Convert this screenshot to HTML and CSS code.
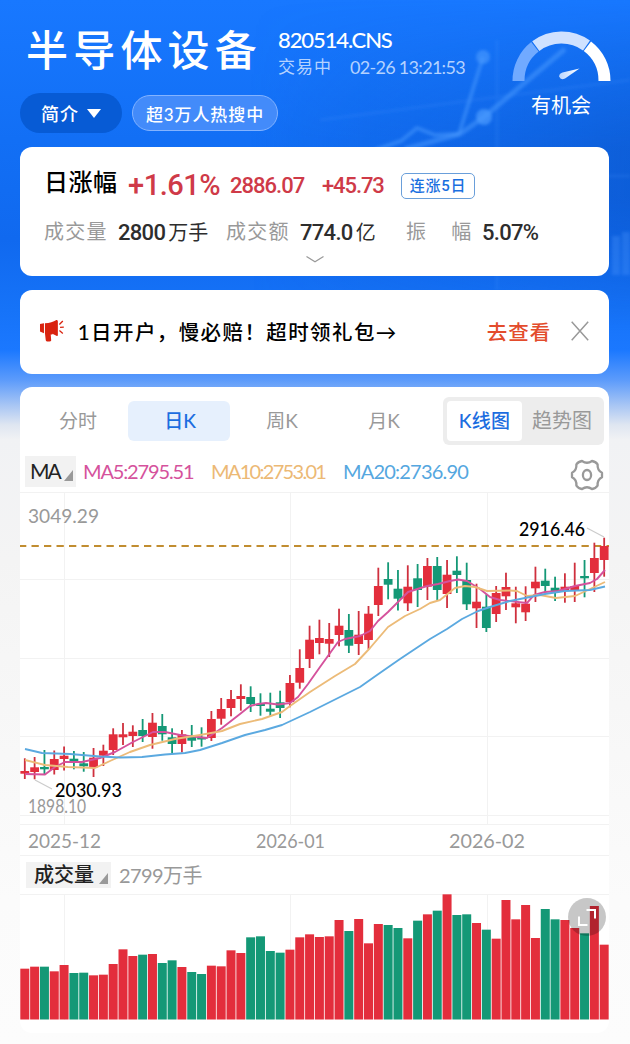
FILE: index.html
```
<!DOCTYPE html>
<html lang="zh-CN">
<head>
<meta charset="utf-8">
<title>半导体设备</title>
<link rel="stylesheet" href="styles.css">
</head>
<body>
<div class="page">
  <svg class="backdrop" viewBox="0 0 630 440" aria-hidden="true">
    <defs>
      <linearGradient id="shade" x1="0" y1="0" x2="1" y2="0">
        <stop offset="0" stop-color="#0b57d0" stop-opacity="0"/>
        <stop offset="1" stop-color="#0b55c8" stop-opacity=".6"/>
      </linearGradient>
      <linearGradient id="shadeFade" x1="0" y1="0" x2="0" y2="1">
        <stop offset="0" stop-color="#000"/>
        <stop offset=".45" stop-color="#fff"/>
        <stop offset=".6" stop-color="#fff"/>
        <stop offset="1" stop-color="#000"/>
      </linearGradient>
      <mask id="shadeMask"><rect width="630" height="330" fill="url(#shadeFade)"/></mask>
      <filter id="soft"><feGaussianBlur stdDeviation="1.6"/></filter>
    </defs>
    <rect x="250" width="380" height="330" fill="url(#shade)" mask="url(#shadeMask)"/>
    <g filter="url(#soft)" fill="none" stroke="#4b9bff" stroke-opacity=".5">
      <path stroke-width="4" d="M459 134L483 57"/>
      <path stroke-width="4" d="M375 150L401 141L417 128L435 135L459 134"/>
      <path stroke-width="5" d="M405 149L460 134L484 117L565 49"/>
      <circle cx="483" cy="57" r="7" fill="#4b9bff" fill-opacity=".6" stroke="none"/>
      <circle cx="484" cy="117" r="8" fill="#4b9bff" fill-opacity=".7" stroke="none"/>
      <path stroke-width="3" stroke-opacity=".15" d="M497 40V290M320 120L630 80M600 176H630"/>
      <path stroke-width="8" stroke-opacity=".3" d="M616 236V275M626 232V275"/>
    </g>
  </svg>

  <header class="header">
    <div class="title-row">
      <h1 class="title">半导体设备</h1>
      <div class="meta">
        <div class="code">820514.CNS</div>
        <div class="status"><span class="state">交易中</span><span class="time">02-26 13:21:53</span></div>
      </div>
      <div class="gauge">
        <svg width="100" height="52" viewBox="0 0 100 52">
          <defs><linearGradient id="needle"><stop offset="0" stop-color="#b9d5ff"/><stop offset="1" stop-color="#fff"/></linearGradient></defs>
          <g fill="none" stroke-width="12">
            <path stroke="#71aaff" d="M7.5 51A43 43 0 0 1 23.9 16.8"/>
            <path stroke="#cfe1ff" d="M24.8 16.1A43 43 0 0 1 75.5 15.5"/>
            <path stroke="#fff" d="M76.4 16.2A43 43 0 0 1 93.5 51"/>
          </g>
          <path fill="url(#needle)" d="M68.5 38.5L54 48.5Q49.5 50.5 48.2 46.5Q48 43.5 51.5 42.5Z"/>
        </svg>
        <div class="gauge-label">有机会</div>
      </div>
    </div>
    <div class="chips">
      <span class="chip chip-dark">简介<i class="caret"></i></span>
      <span class="chip chip-light">超3万人热搜中</span>
    </div>
  </header>

  <section class="card quote">
    <div class="quote-main">
      <span class="quote-name">日涨幅</span>
      <span class="change">+1.61%</span>
      <span class="price">2886.07</span>
      <span class="delta">+45.73</span>
      <span class="streak">连涨5日</span>
    </div>
    <div class="quote-sub">
      <span class="label l1">成交量</span><span class="value v1">2800<b>万手</b></span>
      <span class="label l2">成交额</span><span class="value v2">774.0<b>亿</b></span>
      <span class="label l3"><i>振</i><i>幅</i></span><span class="value">5.07%</span>
    </div>
    <svg class="more" width="18" height="7" viewBox="0 0 18 7"><path d="M.5 .5L9 5.8L17.5 .5" fill="none" stroke="#999" stroke-width="1.2"/></svg>
  </section>

  <section class="card notice">
    <svg width="26" height="24" viewBox="0 0 26 24">
      <path fill="#d9230f" d="M1 5L5 4.3V14.2L1 12.6ZM6 4.2Q13 4 17.5 1Q19 .5 19 2.5V16Q19 17.5 17.5 16.7L13.5 14.8V15.6H11.8L12.3 21.6Q12 22.5 10.5 22.5H8Q7 22.3 6.8 21.3L6 14.2Z"/>
      <path stroke="#d9230f" stroke-width="1.3" d="M20.5 5.5L24 2M21.2 8.3L25 8M20.6 11.5L24 14.5" fill="none"/>
    </svg>
    <span class="notice-text">1日开户，慢必赔！超时领礼包→</span>
    <span class="notice-link">去查看</span>
    <svg class="close" width="18" height="20" viewBox="0 0 18 20"><path d="M.7 .7L17.3 19.3M17.3 .7L.7 19.3" stroke="#999" stroke-width="1.5"/></svg>
  </section>

  <section class="card market">
    <nav class="tabs">
      <span class="tab">分时</span><span class="tab active">日K</span><span class="tab">周K</span><span class="tab">月K</span>
      <div class="switch"><span class="on">K线图</span><span class="off">趋势图</span></div>
    </nav>
    <div class="indicators">
      <span class="picker ma-picker">MA<i class="corner"></i></span>
      <span class="ma ma5">MA5:2795.51</span><span class="ma ma10">MA10:2753.01</span><span class="ma ma20">MA20:2736.90</span>
      <svg class="gear" width="34" height="32" viewBox="0 0 34 32" fill="none" stroke="#999" stroke-width="2.3" stroke-linejoin="round">
        <path d="M12 2Q17 5.6 22 2Q25.5 2.4 27.6 5.4Q27.2 11.6 32 13.8V18.2Q27.2 20.4 27.6 26.6Q25.5 29.6 22 30Q17 26.4 12 30Q8.500 29.6 6.400 26.6Q6.800 20.4 2 18.2V13.8Q6.800 11.6 6.400 5.400Q8.500 2.400 12 2Z"/>
        <ellipse cx="17" cy="16" rx="4.1" ry="5"/>
      </svg>
    </div>
    <svg class="kline" id="kline" width="589" height="364" viewBox="20 492 589 364">
      <path class="grid" d="M20 492.5H609M20 579.5H609M20 658.5H609M20 736.5H609M20 815.5H609M20 824.5H609M20 855.5H609M64.5 492V825M290.5 492V825M487.5 492V825"/>
      <path class="last" d="M19 546H609"/>
      <g id="candles"></g>
      <path class="line5" d="M25 774L45 774.5L55 767L65 762L82 762L100 758L115 752L133 742L153 732L165 732L180 735L207 738L222 728L240 714L250 706L258 704L266 703L278 704.5L290 703L298 697L308 684L320 667L338 642L345 639L360 636L370 631L378 621L388 612L408 592L427 586L438 584L450 581L458 579.5L467 581L480 589L490 597L500 600L527 603L534 595L545 592L558 591L575 586L590 583L597 579L605 570"/>
      <path class="line10" d="M25 760L45 765L68 767L95 768L110 761L130 752L150 745L175 739L200 735L222 731L240 724L262 719L282 712L290 706L310 692L335 676L355 664L370 648L388 627L405 616L420 609L430 603L440 600L455 588L465 586L475 587L487 591L510 590.5L517 591L527 596L540 595L556 598L575 596L590 589L605 582"/>
      <path class="line20" d="M25 749L42 753L70 754L100 756.5L120 757.5L142 757L165 754.5L185 753L200 750L222 743L245 735L265 730L282 725L310 712L342 696L360 687L377 675L400 659L415 649L430 639L447 629L462 619L478 611L490 607L510 601L545 594L565 591L590 590L605 586.5"/>
      <path class="leader" d="M587 528L604 537M35 780L52 789"/>
      <g class="axis">
        <text x="28" y="523" textLength="71" lengthAdjust="spacingAndGlyphs">3049.29</text>
        <text x="28" y="813" textLength="58" lengthAdjust="spacingAndGlyphs">1898.10</text>
        <text x="28" y="848" textLength="73" lengthAdjust="spacingAndGlyphs">2025-12</text>
        <text x="256" y="848" textLength="69" lengthAdjust="spacingAndGlyphs">2026-01</text>
        <text x="449" y="848" textLength="76" lengthAdjust="spacingAndGlyphs">2026-02</text>
      </g>
      <g class="mark">
        <text x="519" y="536" textLength="66" lengthAdjust="spacingAndGlyphs">2916.46</text>
        <text x="55" y="797" textLength="67" lengthAdjust="spacingAndGlyphs">2030.93</text>
      </g>
    </svg>
    <div class="volume-head">
      <span class="picker vol-picker">成交量<i class="corner"></i></span><span class="vol-value">2799万手</span>
    </div>
    <div class="volume">
      <svg width="589" height="126" viewBox="20 894 589 126">
        <path class="grid" d="M20 894.5H609M64.5 895V1020M290.5 895V1020M487.5 895V1020"/>
        <g id="bars"></g>
      </svg>
      <span class="expand"><svg width="38" height="38" viewBox="0 0 38 38" fill="none" stroke="#fff" stroke-width="2"><path d="M18.5 12H27V20.5M11 18.5V27H19.5"/></svg></span>
    </div>
  </section>
</div>
<script src="chart.js"></script>
</body>
</html>
```
FILE: styles.css
```
* { box-sizing: border-box; }
body {
  margin: 0;
  font-family: Lato, "Noto Sans CJK SC", sans-serif;
  color: #111;
}
i, b { font-style: normal; font-weight: inherit; }
.page {
  position: relative;
  width: 630px;
  height: 1044px;
  overflow: hidden;
  padding: 0 21px 0 20px;
  background: linear-gradient(#1878ff 0, #126ff5 140px, #1069ef 240px, #1673f8 310px, #1b78ff 350px, #5c9bfb 380px, #a7c5f4 405px, #dfe6f1 425px, #f1f2f4 440px, #f4f4f4 560px, #fbfbfb 900px, #fcfcfc 1044px);
}
.backdrop { position: absolute; left: 0; top: 0; width: 630px; height: 440px; }
.header { position: relative; height: 147px; color: #fff; }
.title-row { display: flex; height: 93px; }
.title {
  flex: none;
  margin: 18px 0 0 6px;
  width: 252px;
  font-size: 42px;
  line-height: 64px;
  font-weight: 500;
  letter-spacing: 5.2px;
  white-space: nowrap;
}
.meta { flex: none; padding-top: 26px; width: 233px; white-space: nowrap; }
.code { font-size: 22px; line-height: 28px; font-weight: 500; letter-spacing: -1.1px; }
.status { display: flex; gap: 18px; font-size: 18px; line-height: 26px; color: #b4d2ff; }
.state { font-size: 17px; letter-spacing: 1px; }
.time { letter-spacing: -.7px; }
.gauge { flex: none; padding-top: 30px; width: 100px; text-align: center; }
.gauge svg { display: block; }
.gauge-label { margin-top: 8px; font-size: 20px; line-height: 30px; white-space: nowrap; }
.chips { display: flex; align-items: center; gap: 10px; height: 40px; }
.chip { display: flex; align-items: center; justify-content: center; white-space: nowrap; font-weight: 500; }
.chip-dark { width: 102px; height: 40px; border-radius: 20px; background: #075bd5; font-size: 18px; letter-spacing: 1px; gap: 8px; }
.caret { border: 7px solid transparent; border-top: 9px solid #fff; border-bottom: 0; }
.chip-light { width: 146px; height: 36px; border-radius: 18px; border: 1px solid #83b3ff; background: #438bfa; font-size: 17px; letter-spacing: .9px; }
.card { position: relative; background: #fff; border-radius: 12px; }
.quote { height: 129px; padding: 17px 0 0 24px; }
.quote-main { display: flex; align-items: center; height: 41px; font-family: Roboto, "Noto Sans CJK SC", sans-serif; color: #cf3a48; white-space: nowrap; }
.quote-name { width: 84px; font-size: 24px; font-weight: 500; line-height: 34px; margin-top: -4px; color: #000; letter-spacing: .5px; }
.change { width: 102px; font-size: 29px; font-weight: 500; letter-spacing: -.45px; }
.price { width: 92px; font-size: 22px; font-weight: 500; letter-spacing: -1px; padding-top: 1px; }
.delta { width: 79px; font-size: 22px; font-weight: 500; letter-spacing: -1.1px; padding-top: 1px; }
.streak { width: 74px; height: 26px; margin-top: 3px; border: 1px solid #6a9fda; border-radius: 5px; color: #1b6fe0; font-size: 15px; font-weight: 500; line-height: 24px; letter-spacing: .8px; text-align: center; }
.quote-sub { display: flex; align-items: center; height: 40px; margin-top: 8px; font-family: Roboto, "Noto Sans CJK SC", sans-serif; font-size: 22px; line-height: 30px; color: #2d2d2d; white-space: nowrap; }
.label { color: #999; font-size: 20px; letter-spacing: 1.2px; margin-top: -2px; }
.l1 { width: 74px; }
.l2 { width: 74px; }
.l3 { display: flex; gap: 24px; width: 76px; }
.value { font-weight: 500; letter-spacing: -.7px; }
.value b { font-weight: 400; font-size: 20px; letter-spacing: 0; margin-left: 3px; }
.v1 { width: 108px; }
.v2 { width: 106px; }
.more { position: absolute; left: 286px; top: 109px; }
.notice { display: flex; align-items: center; height: 84px; margin-top: 14px; padding: 0 20px 2px 19px; white-space: nowrap; }
.notice-text { width: 427px; padding-left: 13px; font-size: 20.5px; font-weight: 500; color: #000; letter-spacing: 1.4px; }
.notice-link { width: 85px; font-size: 20.5px; font-weight: 500; color: #e34c2c; letter-spacing: 1px; margin-left: -2px; }
.market { height: 646px; margin-top: 13px; }
.tabs { display: flex; align-items: center; height: 68px; padding-left: 6px; white-space: nowrap; }
.tab { width: 102px; height: 40px; border-radius: 6px; text-align: center; padding-left: 2px; font-size: 19px; line-height: 39px; color: #999; }
.active { background: #e6f0fd; color: #1c6de0; font-weight: 500; }
.switch { display: flex; width: 161px; height: 48px; margin-left: 9px; padding: 4px; border-radius: 6px; background: #ededed; font-size: 19px; line-height: 39px; text-align: center; }
.on { width: 75px; border-radius: 4px; background: #fff; color: #1c6de0; font-weight: 500; letter-spacing: .3px; }
.off { flex: 1; padding-left: 2px; color: #999; font-size: 20px; }
.indicators { display: flex; align-items: center; height: 37px; padding: 0 4px 4px 5px; font-size: 20px; white-space: nowrap; }
.picker { position: relative; background: #f2f2f2; color: #222; }
.ma-picker { width: 51px; height: 31px; padding-left: 5px; font-size: 21px; line-height: 30px; letter-spacing: -2px; }
.corner { position: absolute; right: 3px; bottom: 6px; border-left: 9px solid transparent; border-bottom: 11px solid #999; }
.ma { line-height: 24px; margin-top: -2px; }
.ma5 { width: 128px; margin-left: 7px; color: #d5529c; letter-spacing: -1.15px; }
.ma10 { width: 132px; color: #ecb975; letter-spacing: -1.7px; }
.ma20 { width: 227px; color: #55a7df; letter-spacing: -.8px; }
.gear { position: relative; top: 3px; }
.kline { display: block; }
.grid { fill: none; stroke: #f2f2f2; stroke-width: 1; }
.last { fill: none; stroke: #c18d30; stroke-width: 2; stroke-dasharray: 7.3 5.2; }
.line5, .line10, .line20 { fill: none; stroke-width: 1.9; stroke-linejoin: round; }
.line5 { stroke: #d5529c; }
.line10 { stroke: #ecbb78; }
.line20 { stroke: #5ba9e0; }
.leader { fill: none; stroke: #ccc; stroke-width: 1.3; }
.axis { fill: #999; font-size: 20px; }
.mark { fill: #000; font-size: 20px; font-weight: 500; }
.up { fill: #e32e3c; }
.down { fill: #149876; }
.wick-up { fill: #cf303e; }
.volume-head { display: flex; align-items: center; height: 38px; padding: 0 0 0 6px; white-space: nowrap; }
.vol-picker { width: 85px; height: 26px; padding-left: 8px; font-size: 20px; line-height: 25px; font-weight: 500; }
.vol-picker .corner { bottom: 4px; }
.vol-value { margin-left: 8px; font-size: 20px; line-height: 26px; color: #999; letter-spacing: -.6px; }
.volume { position: relative; }
.volume > svg { display: block; }
.expand { position: absolute; left: 548px; top: 4px; width: 38px; height: 38px; border-radius: 50%; background: rgba(0, 0, 0, .22); }
```
FILE: chart.js
```
// Each row: direction, high, body top, body bottom, low, volume bar top.
const rows = [
  ['u',758.3,771,773.7,779,266],['u',757,767.3,772,779.3,260],['d',750,767,769.3,774.7,260],['u',750.5,759,770,774.5,274],
  ['u',746.5,755.7,759,770.5,255],['d',751,758.7,762,769.3,279],['d',752,763.3,766.3,771.7,278],['u',748,757.7,767.3,777,286],
  ['u',744.7,750.7,755.7,766,284],['u',728.3,734.3,750,755,252],['u',723,734.3,737.3,745,208],['u',725.3,731.7,736,747,228],
  ['d',719,730,736,742,224],['u',713,722.7,737,748.7,222],['d',714,726,734.3,740.7,249],['d',728.3,737.3,744,753.3,241],
  ['u',730,734.3,744,752.3,261],['d',725,735.7,740.7,747,276],['d',727.3,737.3,739.5,746.7,282],['u',711,719,738,741,257],
  ['u',698,709,718.7,724.7,259],['u',690,699,708,716.3,211],['u',684.3,696,699,710.7,219],['d',686.3,697,704,712,172],
  ['d',693.3,704,706,715.7,169],['d',692.7,708.7,711.7,716,213],['d',690.7,702.3,708,718,218],['u',675,683,702,707.3,209],
  ['u',649.3,668,682.7,688.7,172],['u',625.7,639.7,659,668,163],['u',619.7,638,643,654.3,171],['u',623,639,643.7,657,169],
  ['u',608.7,625.7,635,646.3,120],['d',614,630,645.7,653,153],['u',611,634.7,644,655,117],['u',606,613.7,640,649,190],
  ['u',567.7,586,605,616,132],['d',562.3,579,584.7,599.3,135],['d',570,588.7,598.7,610.5,144],['u',565.3,586.7,603.3,611,175],
  ['d',564,578.3,590,607,122],['u',558,566,586.7,600,103],['d',557,566,590,601,92],['u',560,574.7,594,608,43],
  ['d',556.3,570.7,575,593,105],['d',562.7,580,604.3,610,103],['u',583.7,601.7,608.3,628,129],['d',594.3,606.7,628,632,149],
  ['u',586,593,614,622,176],['u',572.7,587,596.3,610,60],['u',586.7,603.3,607.3,623.3,118],['u',586.3,603.7,612.3,621,75],
  ['u',566.7,581.7,588.3,602,174],['d',568.7,580.7,586,593.3,87],['d',576.7,587.7,592.3,601,118],['u',573.3,586.7,591,602.7,120],
  ['u',562.7,586,590.3,602,144],['d',560,576,578.3,597.3,160],['u',542.7,558,573,592,78],['u',537.7,546,560,576.7,194]
];
const step = 9.82;
const rect = (x, y, w, h, c) =>
  `<rect x="${x.toFixed(2)}" y="${y.toFixed(2)}" width="${w}" height="${h.toFixed(2)}" class="${c}"/>`;
let candles = '', bars = '';
rows.forEach(([dir, high, top, bottom, low, vol], i) => {
  const x = 24.8 + step * i;
  const c = dir === 'u' ? 'up' : 'down';
  const wick = dir === 'u' ? 'wick-up' : 'down';
  candles += rect(x - 0.9, high, 1.8, low - high, wick) + rect(x - 4.4, top, 8.8, bottom - top, c);
  const y = 880 + vol / 3;
  bars += rect(20.3 + step * i, y, 9, 1019.5 - y, c);
});
document.getElementById('candles').innerHTML = candles;
document.getElementById('bars').innerHTML = bars;
```
